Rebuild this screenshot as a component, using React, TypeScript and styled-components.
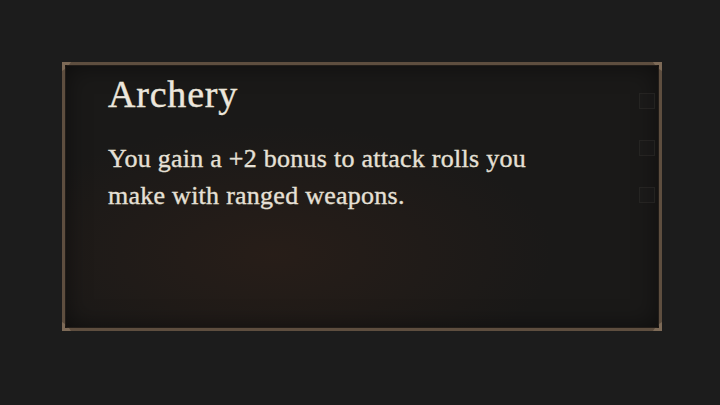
import React from 'react'
import styled, { createGlobalStyle } from 'styled-components'

const GlobalStyle = createGlobalStyle`
  html, body {
    margin: 0;
    padding: 0;
    background: #1c1c1c;
  }
  body {
    width: 720px;
    height: 405px;
    overflow: hidden;
  }
`

const Stage = styled.div`
  width: 720px;
  height: 405px;
  padding: 62px 0 0 62px;
  box-sizing: border-box;
  background: #1c1c1c;
`

const Panel = styled.div`
  position: relative;
  width: 600px;
  height: 269px;
  box-sizing: border-box;
  border: 3px solid #5e4e3f;
  box-shadow: inset 0 0 0 1px #221d19, inset 0 0 24px rgba(0, 0, 0, 0.5);
  background:
    radial-gradient(ellipse 280px 130px at 35% 72%, rgba(50, 33, 24, 0.55), rgba(30, 24, 22, 0) 100%),
    #1a1918;
  padding: 9px 43px 0 43px;
  font-family: 'Liberation Serif', 'DejaVu Serif', serif;
  color: #ece6dc;
`

const Title = styled.h2`
  margin: 0;
  font-size: 38px;
  line-height: 40px;
  font-weight: 400;
  letter-spacing: 0.8px;
  -webkit-text-stroke: 0.4px #ece6dc;
`

const Body = styled.p`
  margin: 26px 0 0 0;
  width: 470px;
  font-size: 26px;
  line-height: 37px;
  font-weight: 400;
  letter-spacing: 0.26px;
  color: #e6e0d6;
  -webkit-text-stroke: 0.35px #e6e0d6;
`

const Corner = styled.svg<{ $x: 'left' | 'right'; $y: 'top' | 'bottom' }>`
  position: absolute;
  width: 12px;
  height: 12px;
  ${(p) => (p.$x === 'left' ? 'left: -3px;' : 'right: -3px;')}
  ${(p) => (p.$y === 'top' ? 'top: -3px;' : 'bottom: -3px;')}
  transform: scale(${(p) => (p.$x === 'left' ? 1 : -1)}, ${(p) => (p.$y === 'top' ? 1 : -1)});
`

const SlotColumn = styled.div`
  position: absolute;
  right: 4px;
  top: 28px;
  display: flex;
  flex-direction: column;
  gap: 31px;
`

const Slot = styled.div`
  width: 14px;
  height: 14px;
  border: 1px solid rgba(64, 60, 56, 0.3);
  background: rgba(36, 34, 33, 0.2);
`

const CornerMark = ({ x, y }: { x: 'left' | 'right'; y: 'top' | 'bottom' }) => (
  <Corner $x={x} $y={y} viewBox="0 0 12 12">
    <path d="M0 0 L9 0 L7 3 L3 3 L3 7 L0 9 Z" fill="#7d6a57" />
    <path d="M3.5 3.5 L7 7" stroke="#14110f" strokeWidth="1.6" />
  </Corner>
)

export default function App() {
  return (
    <Stage>
      <GlobalStyle />
      <Panel>
        <CornerMark x="left" y="top" />
        <CornerMark x="right" y="top" />
        <CornerMark x="left" y="bottom" />
        <CornerMark x="right" y="bottom" />
        <Title>Archery</Title>
        <Body>You gain a +2 bonus to attack rolls you make with ranged weapons.</Body>
        <SlotColumn>
          <Slot />
          <Slot />
          <Slot />
        </SlotColumn>
      </Panel>
    </Stage>
  )
}
